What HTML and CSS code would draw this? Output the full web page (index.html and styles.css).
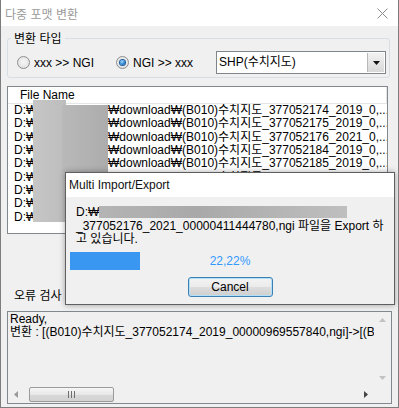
FILE: index.html
```html
<!DOCTYPE html>
<html lang="ko">
<head>
<meta charset="utf-8">
<title>다중 포맷 변환</title>
<link rel="stylesheet" href="styles.css">
</head>
<body>
<div class="win">
  <div class="titlebar">
    <span class="title">다중 포맷 변환</span>
    <svg class="close" width="11" height="11" viewBox="0 0 11 11"><path d="M0.5 0.5L10.5 10.5M10.5 0.5L0.5 10.5" stroke="#8a8a8a" stroke-width="1" fill="none"/></svg>
  </div>
  <div class="content">
    <fieldset class="group">
      <legend>변환 타입</legend>
      <div class="typerow">
        <label class="radio r1"><span class="rbtn"></span>xxx &gt;&gt; NGI</label>
        <label class="radio r2"><span class="rbtn on"></span>NGI &gt;&gt; xxx</label>
        <div class="combo">
          <span class="combo-text">SHP(수치지도)</span>
          <span class="combo-btn"><svg width="7" height="4" viewBox="0 0 7 4"><path d="M0 0H7L3.5 4Z" fill="#111"/></svg></span>
        </div>
      </div>
    </fieldset>

    <div class="list">
      <div class="list-head">File Name</div>
      <div class="row"><span class="drv">D:₩</span><span class="path">₩download₩(B010)수치지도_377052174_2019_0,...</span></div>
      <div class="row"><span class="drv">D:₩</span><span class="path">₩download₩(B010)수치지도_377052175_2019_0,...</span></div>
      <div class="row"><span class="drv">D:₩</span><span class="path">₩download₩(B010)수치지도_377052176_2021_0,...</span></div>
      <div class="row"><span class="drv">D:₩</span><span class="path">₩download₩(B010)수치지도_377052184_2019_0,...</span></div>
      <div class="row"><span class="drv">D:₩</span><span class="path">₩download₩(B010)수치지도_377052185_2019_0,...</span></div>
      <div class="row"><span class="drv">D:₩</span><span class="path">₩download₩(B010)수치지도_377052186_2019_0,...</span></div>
      <div class="row"><span class="drv">D:₩</span><span class="path">₩download₩(B010)수치지도_377052187_2019_0,...</span></div>
      <div class="row"><span class="drv">D:₩</span><span class="path">₩download₩(B010)수치지도_377052188_2019_0,...</span></div>
      <div class="row"><span class="drv">D:₩</span><span class="path">₩download₩(B010)수치지도_377052189_2019_0,...</span></div>
      <div class="blur blur-a"></div>
      <div class="blur blur-b"></div>
    </div>

    <div class="err-label">오류 검사</div>
    <div class="errbox">
      <div class="errtext">Ready,<br>변환 : [(B010)수치지도_377052174_2019_00000969557840,ngi]-&gt;[(B010)수치지도_377052174_2019</div>
      <div class="vscroll">
        <svg width="7" height="4" viewBox="0 0 7 4"><path d="M0 4H7L3.5 0Z" fill="#c2c2c2"/></svg>
        <svg width="7" height="4" viewBox="0 0 7 4"><path d="M0 0H7L3.5 4Z" fill="#c2c2c2"/></svg>
      </div>
      <div class="hscroll">
        <svg class="harrow" width="4" height="7" viewBox="0 0 4 7"><path d="M4 0V7L0 3.5Z" fill="#9a9a9a"/></svg>
        <div class="hthumb"><span class="grip"></span><span class="grip"></span><span class="grip"></span></div>
        <span class="hspace"></span>
        <svg class="harrow" width="4" height="7" viewBox="0 0 4 7"><path d="M0 0V7L4 3.5Z" fill="#444"/></svg>
      </div>
      <div class="corner"></div>
    </div>
  </div>

  <div class="dialog">
    <div class="dlg-title">Multi Import/Export</div>
    <div class="dlg-body">
      <p class="msg">D:₩<span class="blur-line"></span><br>_377052176_2021_00000411444780,ngi 파일을 Export 하<br>고 있습니다.</p>
      <div class="progress-row">
        <div class="bar"></div>
        <span class="pct">22,22%</span>
      </div>
      <div class="btn-row">
        <button class="btn">Cancel</button>
      </div>
    </div>
  </div>
</div>
</body>
</html>
```

FILE: styles.css
```css
* { box-sizing: border-box; }
html, body { margin: 0; padding: 0; background: #f0f0f0; }
body {
  font-family: "Liberation Sans", "Noto Sans CJK KR", sans-serif;
  font-size: 12px;
  color: #000;
}
.win {
  position: relative;
  width: 399px;
  height: 408px;
  border: 1px solid #7d7d7d;
  border-top: none;
  background: #f0f0f0;
  overflow: hidden;
}
.titlebar {
  height: 26px;
  background: #fff;
  display: flex;
  align-items: center;
  justify-content: space-between;
  padding: 0 10px 0 4px;
}
.title {
  font-family: "Noto Sans CJK KR", sans-serif;
  font-size: 12px;
  color: #9a9a9a;
}
.close { display: block; margin-top: 1px; }

.content { display: flex; flex-direction: column; }

.group {
  margin: 4px 8px 0 6px;
  padding: 0;
  border: 1px solid #d5dfe5;
  border-radius: 3px;
}
.group legend {
  margin-left: 3px;
  padding: 0 3px;
  font-family: "Noto Sans CJK KR", sans-serif;
  font-size: 12px;
  line-height: 16px;
}
.typerow {
  display: flex;
  align-items: center;
  padding: 5px 3px 3px 9px;
}
.radio {
  display: flex;
  align-items: center;
  gap: 4px;
  height: 23px;
}
.r1 { width: 99px; }
.r2 { width: 100px; }
.rbtn {
  width: 13px;
  height: 13px;
  border-radius: 50%;
  border: 1px solid #8e8f8f;
  background: radial-gradient(circle at 50% 45%, #f6f6f6 0%, #e6e6e6 60%, #d0d0d0 100%);
  display: flex;
  align-items: center;
  justify-content: center;
}
.rbtn.on::after {
  content: "";
  width: 5px;
  height: 5px;
  border-radius: 50%;
  background: radial-gradient(circle at 40% 35%, #a9dcff 0%, #2a86d8 55%, #0d3f7a 100%);
  box-shadow: 0 0 0 1px #1c5e9e;
}
.combo {
  width: 170px;
  height: 23px;
  border: 1px solid #7f8589;
  background: #fff;
  display: flex;
  align-items: stretch;
}
.combo-text {
  flex: 1;
  padding-left: 2px;
  line-height: 21px;
}
.combo-btn {
  width: 17px;
  border-left: 1px solid #b9b9b9;
  background: linear-gradient(#f2f2f2, #d8d8d8);
  display: flex;
  align-items: center;
  justify-content: center;
  margin: 1px 1px 1px 0;
}

.list {
  position: relative;
  margin: 8px 10px 0 6px;
  height: 148px;
  border: 1px solid #828790;
  background: #fff;
  overflow: hidden;
}
.list-head {
  height: 17px;
  line-height: 16px;
  padding-left: 12px;
  border-bottom: 1px solid #e5e5e5;
  border-right: 1px solid #e5e5e5;
  background: #fff;
}
.row {
  display: flex;
  height: 13.33px;
  line-height: 13px;
  padding-left: 6px;
  white-space: nowrap;
}
.drv { width: 94px; flex: none; }
.path { overflow: hidden; }
.blur {
  position: absolute;
}
.blur-a {
  left: 25px; top: 13px; width: 33px; height: 122px;
  background: linear-gradient(90deg, #c6c6c6, #bdbdbd);
}
.blur-b {
  left: 54px; top: 18px; width: 46px; height: 67px;
  background: linear-gradient(90deg, #b9b9b9, #acacac);
}

.err-label {
  margin: 53px 0 0 13px;
  font-family: "Noto Sans CJK KR", sans-serif;
  line-height: 16px;
}
.errbox {
  margin: 8px 6px 0 6px;
  height: 93px;
  border: 1px solid #828790;
  background: #f0f0f0;
  display: grid;
  grid-template-columns: 1fr 17px;
  grid-template-rows: 1fr 17px;
}
.errtext {
  padding: 1px 0 0 2px;
  line-height: 13px;
  white-space: nowrap;
  overflow: hidden;
}
.vscroll {
  background: #f0f0f0;
  display: flex;
  flex-direction: column;
  justify-content: space-between;
  align-items: center;
  padding: 6px 0 6px;
}
.hscroll {
  display: flex;
  align-items: center;
  padding: 0 6px 0 6px;
  background: #f0f0f0;
}
.harrow { flex: none; }
.hthumb {
  margin-left: 11px;
  width: 85px;
  height: 15px;
  border: 1px solid #9b9b9b;
  border-radius: 2px;
  background: linear-gradient(#f7f7f7, #e7e7e7 50%, #d8d8d8 51%, #d2d2d2);
  display: flex;
  align-items: center;
  justify-content: center;
  gap: 2px;
}
.grip {
  width: 1px;
  height: 7px;
  background: #6e6e6e;
}
.hspace { flex: 1; }
.corner { background: #f0f0f0; }

.dialog {
  position: absolute;
  left: 64px;
  top: 172px;
  width: 330px;
  height: 133px;
  border: 1px solid #5f5f5f;
  background: #f0f0f0;
  box-shadow: 0 0 6px rgba(0,0,0,0.35);
  display: flex;
  flex-direction: column;
}
.dlg-title {
  height: 24px;
  background: #fff;
  line-height: 24px;
  padding-left: 3px;
  font-size: 12px;
  color: #111;
}
.dlg-body {
  padding: 9px 4px 0;
}
.msg {
  margin: 0 0 0 6px;
  line-height: 13.5px;
  white-space: nowrap;
}
.blur-line {
  display: inline-block;
  width: 248px;
  height: 12px;
  vertical-align: -2px;
  background: linear-gradient(90deg, #b4b4b4, #a9a9a9 40%, #bfbfbf);
}
.progress-row {
  margin-top: 5px;
  display: grid;
  grid-template-columns: 1fr auto 1fr;
  align-items: center;
}
.bar {
  width: 70px;
  height: 18px;
  background: #3a97f1;
}
.pct {
  color: #3399ff;
  line-height: 18px;
}
.btn-row {
  margin-top: 7px;
  display: flex;
  justify-content: center;
}
.btn {
  width: 85px;
  height: 20px;
  padding: 0;
  border: 1px solid #3c7fb1;
  border-radius: 3px;
  background: linear-gradient(#f3f3f3, #ebebeb 50%, #dddddd 51%, #cfcfcf);
  box-shadow: inset 0 0 0 1px #b3e0f9;
  font-family: "Liberation Sans", sans-serif;
  font-size: 12px;
  color: #000;
}
```
